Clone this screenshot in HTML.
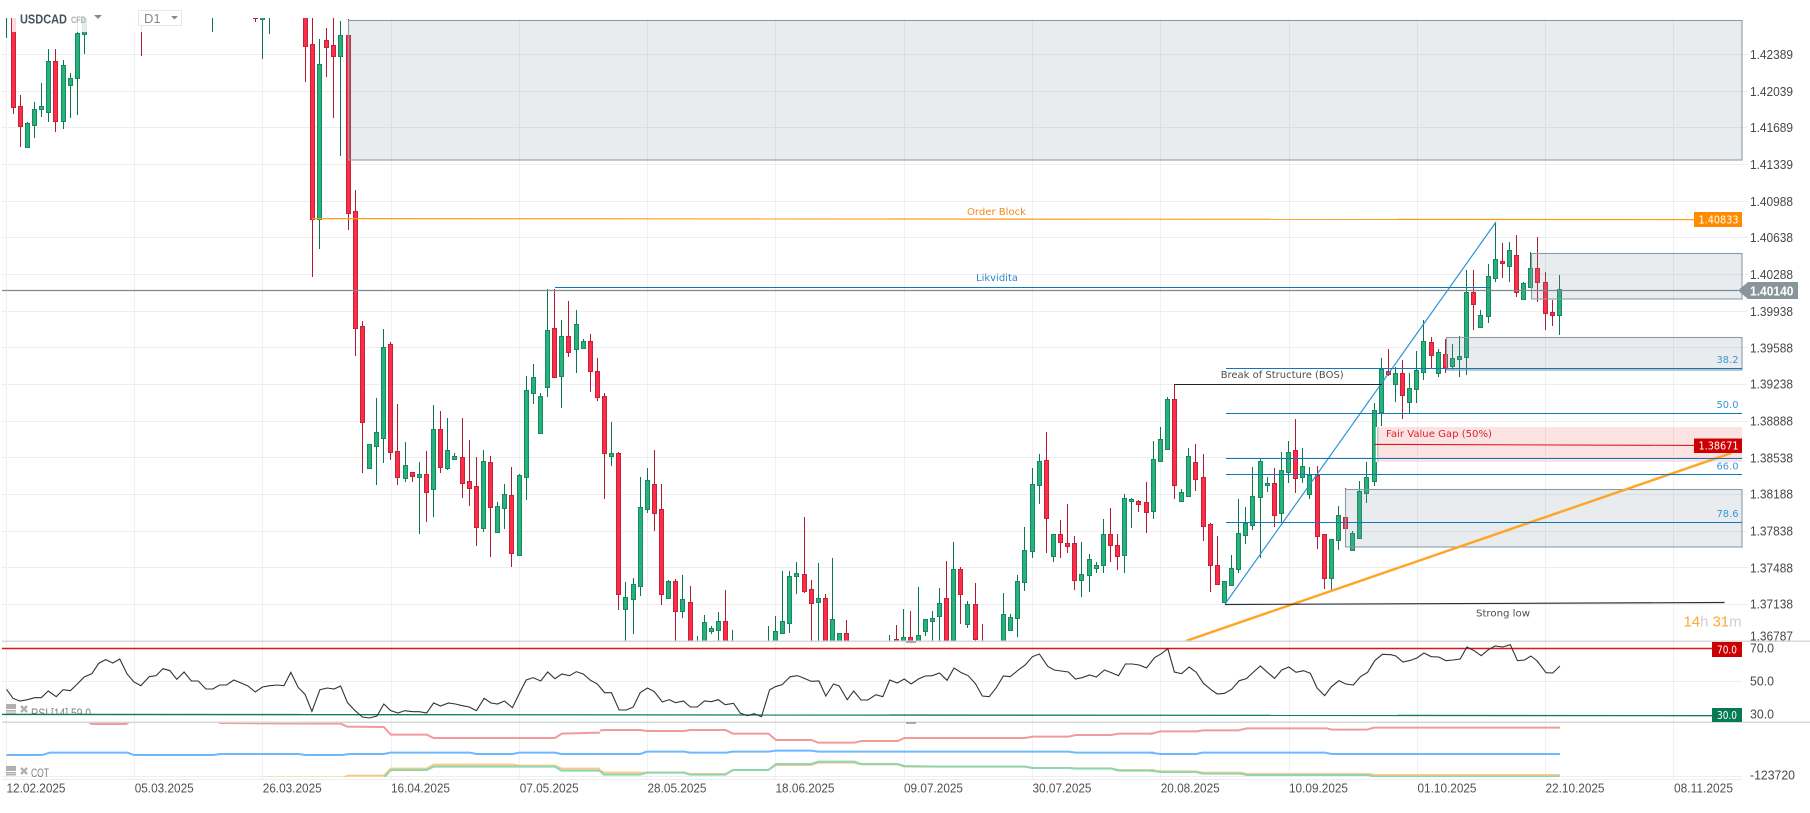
<!DOCTYPE html>
<html><head><meta charset="utf-8"><title>USDCAD</title>
<style>
html,body{margin:0;padding:0;background:#fff;width:1810px;height:813px;overflow:hidden}
svg{display:block;font-family:"Liberation Sans",Arial,sans-serif;filter:blur(.3px)}
.dj{font-family:"DejaVu Sans",sans-serif;font-size:10px}
.ax text{font-size:13px;fill:#45494c}
.dt text{font-size:13px;fill:#4f5356}
.wl{fill:#fff;font-size:13px}
.ns{vector-effect:non-scaling-stroke;fill:none}
</style></head><body>
<svg width="1810" height="813" viewBox="0 0 1810 813" xmlns="http://www.w3.org/2000/svg">
<defs>
<clipPath id="cm"><rect x="0" y="18" width="1810" height="622.5"/></clipPath>
<clipPath id="cc"><rect x="0" y="723" width="1810" height="54"/></clipPath>
<clipPath id="cr"><rect x="0" y="690" width="300" height="24"/></clipPath>
</defs>
<rect width="1810" height="813" fill="#fff"/>
<!-- grid -->
<path d="M2 54.5H1748M2 91.5H1748M2 127.5H1748M2 164.5H1748M2 201.5H1748M2 237.5H1748M2 274.5H1748M2 311.5H1748M2 347.5H1748M2 384.5H1748M2 421.5H1748M2 457.5H1748M2 494.5H1748M2 531.5H1748M2 567.5H1748M2 604.5H1748M2 681.5H1742M2 776.5H1742M2 779.5H1742" stroke="#eeeeef" stroke-width="1" fill="none"/>
<path d="M6.5 18V779M134.5 18V779M262.5 18V779M391.5 18V779M519.5 18V779M647.5 18V779M775.5 18V779M904.5 18V779M1032.5 18V779M1160.5 18V779M1289.5 18V779M1417.5 18V779M1545.5 18V779M1673.5 18V779" stroke="#eff0f1" stroke-width="1" fill="none"/>
<!-- candles -->
<g clip-path="url(#cm)">
<path fill="none" stroke="#0d7550" stroke-width="1" d="M6.5 0V38M27.5 122V147M34.5 102V138M41.5 83V117M48.5 49V122M63.5 60V129M70.5 73V118M77.5 25V115M84.5 0V54M212.5 0V32M262.5 0V59M269.5 0V34M319.5 39V249M340.5 21V156M369.5 444V468M376.5 398V485M383.5 329V463M405.5 442V482M419.5 462V534M433.5 405V517M447.5 418V470M454.5 453V459M483.5 450V532M497.5 502V532M504.5 484V529M519.5 474V555M526.5 376V500M533.5 364V404M540.5 393V433M547.5 289V397M561.5 320V408M576.5 310V373M583.5 339V348M611.5 422V466M625.5 582V660M633.5 578V634M640.5 477V596M647.5 468V513M668.5 580V598M682.5 575V618M697.5 636V660M704.5 615V660M711.5 626V634M718.5 612V660M732.5 630V660M768.5 626V660M775.5 616V660M782.5 571V634M789.5 571V633M796.5 562V594M818.5 563V660M832.5 558V660M839.5 633V660M889.5 635V660M903.5 609V660M918.5 587V660M925.5 619V636M932.5 611V660M939.5 588V660M953.5 542V640M967.5 601V628M1003.5 593V660M1010.5 614V630M1017.5 575V637M1024.5 527V591M1032.5 468V558M1039.5 454V504M1053.5 534V562M1081.5 542V597M1089.5 554V592M1096.5 562V573M1103.5 519V573M1124.5 494V573M1131.5 498V528M1153.5 441V519M1160.5 427V461M1167.5 397V449M1181.5 489V501M1188.5 448V496M1224.5 581V603M1231.5 555V586M1238.5 499V573M1245.5 507V544M1252.5 467V530M1260.5 458V558M1267.5 477V492M1281.5 452V523M1288.5 441V483M1302.5 448V483M1309.5 467V499M1331.5 539V590M1338.5 506V550M1352.5 531V550M1359.5 481V538M1366.5 462V503M1374.5 403V486M1381.5 358V426M1395.5 367V402M1409.5 373V413M1416.5 351V403M1423.5 320V380M1438.5 349V377M1452.5 344V370M1459.5 336V377M1466.5 270V375M1480.5 310V327M1488.5 264V323M1495.5 222V282M1509.5 242V282M1523.5 282V299M1530.5 252V287M1559.5 275V335"/>
<path fill="none" stroke="#b21a32" stroke-width="1" d="M13.5 0V114M20.5 95V147M55.5 49V132M141.5 0V56M255.5 0V22M305.5 0V82M312.5 0V277M326.5 28V77M333.5 0V118M348.5 19V230M355.5 190V356M362.5 321V473M390.5 342V460M397.5 404V485M412.5 472V482M426.5 451V522M440.5 411V473M462.5 418V498M469.5 440V506M476.5 457V546M490.5 456V557M511.5 467V567M554.5 289V378M568.5 301V357M590.5 334V392M597.5 358V401M604.5 393V499M618.5 452V610M654.5 450V531M661.5 484V605M675.5 579V660M690.5 586V660M725.5 590V660M804.5 517V593M811.5 580V660M825.5 594V660M846.5 620V660M896.5 625V660M910.5 611V660M946.5 561V660M960.5 567V624M975.5 583V660M982.5 624V660M1046.5 432V553M1060.5 520V558M1067.5 504V553M1074.5 536V590M1110.5 508V562M1117.5 534V570M1138.5 500V512M1146.5 482V533M1174.5 384V499M1195.5 444V491M1203.5 454V541M1210.5 523V592M1217.5 536V584M1274.5 468V527M1295.5 419V493M1317.5 466V549M1324.5 534V589M1345.5 488V547M1388.5 349V376M1402.5 360V419M1431.5 337V368M1445.5 339V373M1473.5 270V330M1502.5 243V278M1516.5 235V297M1537.5 237V302M1545.5 272V330M1552.5 300V326"/>
<path fill="#25b27b" stroke="#17885f" stroke-width="1" d="M25.5 123.5h4V147.5h-4zM32.5 109.5h4V125.5h-4zM39.5 106.5h4V109.5h-4zM46.5 61.5h4V112.5h-4zM61.5 65.5h4V121.5h-4zM68.5 78.5h4V85.5h-4zM75.5 33.5h4V78.5h-4zM82.5 0h4V34.5h-4zM260.5 0h4V19.5h-4zM317.5 64.5h4V219.5h-4zM338.5 35.5h4V56.5h-4zM367.5 444.5h4V468.5h-4zM374.5 432.5h4V446.5h-4zM381.5 347.5h4V438.5h-4zM403.5 465.5h4V478.5h-4zM417.5 474.5h4V477.5h-4zM431.5 429.5h4V489.5h-4zM445.5 450.5h4V468.5h-4zM452.5 456.5h4V459.5h-4zM481.5 461.5h4V528.5h-4zM495.5 506.5h4V532.5h-4zM502.5 494.5h4V508.5h-4zM517.5 475.5h4V555.5h-4zM524.5 390.5h4V477.5h-4zM531.5 377.5h4V393.5h-4zM538.5 396.5h4V433.5h-4zM545.5 330.5h4V387.5h-4zM559.5 336.5h4V376.5h-4zM574.5 324.5h4V349.5h-4zM581.5 341.5h4V348.5h-4zM609.5 453.5h4V456.5h-4zM623.5 597.5h4V609.5h-4zM631.5 584.5h4V599.5h-4zM638.5 507.5h4V586.5h-4zM645.5 480.5h4V509.5h-4zM666.5 581.5h4V598.5h-4zM680.5 599.5h4V611.5h-4zM702.5 622.5h4V660h-4zM709.5 628.5h4V631.5h-4zM716.5 621.5h4V630.5h-4zM773.5 631.5h4V660h-4zM780.5 621.5h4V633.5h-4zM787.5 576.5h4V623.5h-4zM794.5 573.5h4V576.5h-4zM816.5 598.5h4V602.5h-4zM830.5 619.5h4V660h-4zM837.5 633.5h4V660h-4zM901.5 637.5h4V660h-4zM916.5 635.5h4V660h-4zM923.5 619.5h4V631.5h-4zM930.5 618.5h4V621.5h-4zM937.5 603.5h4V616.5h-4zM951.5 569.5h4V640.5h-4zM965.5 604.5h4V624.5h-4zM1001.5 614.5h4V660h-4zM1008.5 617.5h4V630.5h-4zM1015.5 581.5h4V618.5h-4zM1022.5 550.5h4V582.5h-4zM1030.5 484.5h4V551.5h-4zM1037.5 461.5h4V485.5h-4zM1051.5 534.5h4V556.5h-4zM1079.5 574.5h4V580.5h-4zM1087.5 559.5h4V575.5h-4zM1094.5 565.5h4V568.5h-4zM1101.5 534.5h4V565.5h-4zM1122.5 498.5h4V555.5h-4zM1129.5 499.5h4V501.5h-4zM1151.5 459.5h4V511.5h-4zM1158.5 439.5h4V461.5h-4zM1165.5 399.5h4V449.5h-4zM1179.5 492.5h4V501.5h-4zM1186.5 456.5h4V496.5h-4zM1222.5 581.5h4V602.5h-4zM1229.5 568.5h4V585.5h-4zM1236.5 533.5h4V569.5h-4zM1243.5 523.5h4V535.5h-4zM1250.5 496.5h4V525.5h-4zM1258.5 461.5h4V497.5h-4zM1265.5 483.5h4V485.5h-4zM1279.5 470.5h4V513.5h-4zM1286.5 452.5h4V472.5h-4zM1300.5 466.5h4V477.5h-4zM1307.5 475.5h4V494.5h-4zM1329.5 539.5h4V578.5h-4zM1336.5 515.5h4V540.5h-4zM1350.5 533.5h4V550.5h-4zM1357.5 491.5h4V538.5h-4zM1364.5 477.5h4V493.5h-4zM1372.5 410.5h4V481.5h-4zM1379.5 369.5h4V412.5h-4zM1393.5 373.5h4V384.5h-4zM1407.5 388.5h4V402.5h-4zM1414.5 370.5h4V389.5h-4zM1421.5 341.5h4V372.5h-4zM1436.5 352.5h4V373.5h-4zM1450.5 358.5h4V366.5h-4zM1457.5 356.5h4V359.5h-4zM1464.5 292.5h4V357.5h-4zM1478.5 315.5h4V327.5h-4zM1486.5 276.5h4V316.5h-4zM1493.5 259.5h4V278.5h-4zM1507.5 250.5h4V266.5h-4zM1521.5 283.5h4V299.5h-4zM1528.5 268.5h4V287.5h-4zM1557.5 289.5h4V315.5h-4z"/>
<path fill="#ff2e48" stroke="#c2223a" stroke-width="1" d="M11.5 0h4V107.5h-4zM18.5 106.5h4V126.5h-4zM53.5 61.5h4V121.5h-4zM253.5 0h4V18.5h-4zM303.5 0h4V46.5h-4zM310.5 44.5h4V219.5h-4zM324.5 40.5h4V47.5h-4zM331.5 45.5h4V56.5h-4zM346.5 35.5h4V213.5h-4zM353.5 211.5h4V328.5h-4zM360.5 326.5h4V422.5h-4zM388.5 344.5h4V452.5h-4zM395.5 451.5h4V477.5h-4zM410.5 472.5h4V476.5h-4zM424.5 474.5h4V492.5h-4zM438.5 429.5h4V467.5h-4zM460.5 457.5h4V483.5h-4zM467.5 481.5h4V488.5h-4zM474.5 486.5h4V527.5h-4zM488.5 462.5h4V507.5h-4zM509.5 495.5h4V553.5h-4zM552.5 328.5h4V377.5h-4zM566.5 336.5h4V352.5h-4zM588.5 341.5h4V371.5h-4zM595.5 371.5h4V397.5h-4zM602.5 396.5h4V453.5h-4zM616.5 453.5h4V594.5h-4zM652.5 484.5h4V513.5h-4zM659.5 509.5h4V594.5h-4zM673.5 581.5h4V611.5h-4zM688.5 602.5h4V660h-4zM723.5 621.5h4V660h-4zM802.5 574.5h4V591.5h-4zM809.5 589.5h4V603.5h-4zM823.5 598.5h4V660h-4zM844.5 633.5h4V660h-4zM894.5 639.5h4V660h-4zM908.5 637.5h4V660h-4zM944.5 598.5h4V640.5h-4zM958.5 569.5h4V594.5h-4zM973.5 604.5h4V639.5h-4zM1044.5 460.5h4V518.5h-4zM1058.5 534.5h4V542.5h-4zM1065.5 543.5h4V546.5h-4zM1072.5 543.5h4V580.5h-4zM1108.5 534.5h4V545.5h-4zM1115.5 545.5h4V556.5h-4zM1136.5 501.5h4V504.5h-4zM1144.5 502.5h4V512.5h-4zM1172.5 399.5h4V485.5h-4zM1193.5 462.5h4V479.5h-4zM1201.5 477.5h4V526.5h-4zM1208.5 524.5h4V565.5h-4zM1215.5 565.5h4V584.5h-4zM1272.5 483.5h4V515.5h-4zM1293.5 450.5h4V478.5h-4zM1315.5 475.5h4V536.5h-4zM1322.5 534.5h4V578.5h-4zM1343.5 517.5h4V528.5h-4zM1386.5 371.5h4V374.5h-4zM1400.5 373.5h4V395.5h-4zM1429.5 342.5h4V355.5h-4zM1443.5 354.5h4V367.5h-4zM1471.5 292.5h4V304.5h-4zM1500.5 261.5h4V263.5h-4zM1514.5 255.5h4V292.5h-4zM1535.5 268.5h4V282.5h-4zM1543.5 282.5h4V313.5h-4zM1550.5 312.5h4V315.5h-4z"/>
</g>
<rect x="12" y="18" width="175" height="14" fill="#fff" fill-opacity=".84"/>
<!-- zones -->
<g stroke="#8b9ca8" stroke-width="1.1" fill="#8296a8" fill-opacity=".18">
<rect x="348.5" y="20.5" width="1393.5" height="139.5"/>
<rect x="1531.5" y="253.5" width="210.5" height="45.5"/>
<rect x="1446.5" y="337.5" width="295.5" height="32.5"/>
<rect x="1345.5" y="489.5" width="396.5" height="57.5"/>
</g>
<rect x="1376" y="427" width="366" height="35" fill="#e83c3c" fill-opacity=".14"/>
<path d="M1376.5 427V462" stroke="#fff" stroke-width="1.5"/>
<path d="M1377.8 427V462" stroke="#8b9ca8" stroke-width="1" stroke-opacity=".7"/>
<!-- lines -->
<g clip-path="url(#cm)" fill="none">
<path d="M1185.8 641L1731.5 453" stroke="#ffa426" stroke-width="2.4"/>
<path d="M1225 604L1496 222" stroke="#2b95d6" stroke-width="1.2"/>
<path d="M1225 604.5L1724.5 602.5" stroke="#2a3136" stroke-width="1.2"/>
<path d="M1174 384.5H1382" stroke="#1f2428" stroke-width="1.1"/>
<path d="M555 287.5H1490" stroke="#1077b8" stroke-width="1.1"/>
<path d="M2 290.5H1738" stroke="#7e8990" stroke-width="1.2"/>
<path d="M312 218.6L1694 219.6" stroke="#ff9a1a" stroke-width="1.2"/>
<path d="M1374 444.4L1694 445.4" stroke="#d81818" stroke-width="1.1"/>
<path d="M1226 368.5H1742M1226 413.5H1742M1226 458.5H1742M1226 474.5H1742M1226 522.5H1742" stroke="#1077b8" stroke-width="1.1"/>
</g>
<!-- annotations -->
<text class="dj" x="967" y="215" fill="#f08c1e" textLength="59" lengthAdjust="spacingAndGlyphs">Order Block</text>
<text class="dj" x="976" y="281" fill="#2a8ccc" textLength="42" lengthAdjust="spacingAndGlyphs">Likvidita</text>
<text class="dj" x="1220.7" y="378" fill="#4a4f53" textLength="123" lengthAdjust="spacingAndGlyphs">Break of Structure (BOS)</text>
<text class="dj" x="1386" y="437" fill="#d9252c" textLength="106" lengthAdjust="spacingAndGlyphs">Fair Value Gap (50%)</text>
<text class="dj" x="1476" y="616.5" fill="#4a4f53" textLength="54" lengthAdjust="spacingAndGlyphs">Strong low</text>
<g class="dj" fill="#3a96d6">
<text x="1716.5" y="363" textLength="22" lengthAdjust="spacingAndGlyphs">38.2</text>
<text x="1716.5" y="408" textLength="22" lengthAdjust="spacingAndGlyphs">50.0</text>
<text x="1716.5" y="469.5" textLength="22" lengthAdjust="spacingAndGlyphs">66.0</text>
<text x="1716.5" y="517" textLength="22" lengthAdjust="spacingAndGlyphs">78.6</text>
</g>
<!-- price tags -->
<rect x="1694" y="212" width="48" height="15" fill="#ff8c00"/>
<text class="dj wl" x="1698.5" y="223.5" textLength="40" lengthAdjust="spacingAndGlyphs" style="font-size:10.5px">1.40833</text>
<rect x="1694" y="438.5" width="48" height="14.5" fill="#cc0000"/>
<text class="dj wl" x="1698.5" y="449.5" textLength="40" lengthAdjust="spacingAndGlyphs" style="font-size:10.5px">1.38671</text>
<path d="M1738 290.5L1748 282H1798V299H1748Z" fill="#8a959b"/>
<text x="1750" y="295.5" fill="#fff" font-size="13" font-weight="bold" textLength="43.5" lengthAdjust="spacingAndGlyphs">1.40140</text>
<!-- axis -->
<g class="ax">
<text x="1750" y="59" textLength="43" lengthAdjust="spacingAndGlyphs">1.42389</text>
<text x="1750" y="96" textLength="43" lengthAdjust="spacingAndGlyphs">1.42039</text>
<text x="1750" y="132" textLength="43" lengthAdjust="spacingAndGlyphs">1.41689</text>
<text x="1750" y="169" textLength="43" lengthAdjust="spacingAndGlyphs">1.41339</text>
<text x="1750" y="206" textLength="43" lengthAdjust="spacingAndGlyphs">1.40988</text>
<text x="1750" y="242" textLength="43" lengthAdjust="spacingAndGlyphs">1.40638</text>
<text x="1750" y="279" textLength="43" lengthAdjust="spacingAndGlyphs">1.40288</text>
<text x="1750" y="316" textLength="43" lengthAdjust="spacingAndGlyphs">1.39938</text>
<text x="1750" y="352.5" textLength="43" lengthAdjust="spacingAndGlyphs">1.39588</text>
<text x="1750" y="388.5" textLength="43" lengthAdjust="spacingAndGlyphs">1.39238</text>
<text x="1750" y="425.5" textLength="43" lengthAdjust="spacingAndGlyphs">1.38888</text>
<text x="1750" y="462.5" textLength="43" lengthAdjust="spacingAndGlyphs">1.38538</text>
<text x="1750" y="498.5" textLength="43" lengthAdjust="spacingAndGlyphs">1.38188</text>
<text x="1750" y="535.5" textLength="43" lengthAdjust="spacingAndGlyphs">1.37838</text>
<text x="1750" y="572.5" textLength="43" lengthAdjust="spacingAndGlyphs">1.37488</text>
<text x="1750" y="608.5" textLength="43" lengthAdjust="spacingAndGlyphs">1.37138</text>
<text x="1750" y="640.5" textLength="43" lengthAdjust="spacingAndGlyphs">1.36787</text>
<text x="1750" y="652.5" textLength="24" lengthAdjust="spacingAndGlyphs">70.0</text>
<text x="1750" y="685.5" textLength="24" lengthAdjust="spacingAndGlyphs">50.0</text>
<text x="1750" y="718.5" textLength="24" lengthAdjust="spacingAndGlyphs">30.0</text>
<text x="1750" y="779.5" textLength="45" lengthAdjust="spacingAndGlyphs">-123720</text>
</g>
<text x="1683.5" y="626.5" font-size="15" textLength="58" lengthAdjust="spacingAndGlyphs"><tspan fill="#ffa733">14</tspan><tspan fill="#cfcfcf">h </tspan><tspan fill="#ffa733">31</tspan><tspan fill="#cfcfcf">m</tspan></text>
<!-- panes -->
<rect x="2" y="640.5" width="1808" height="1.5" fill="#d8d8d8"/>
<rect x="2" y="721.5" width="1808" height="1.5" fill="#d8d8d8"/>
<rect x="906" y="641" width="10" height="2" fill="#aaa"/>
<rect x="906" y="722" width="10" height="2" fill="#aaa"/>
<!-- RSI -->
<path d="M2 648.5H1712" stroke="#e01818" stroke-width="1.4"/>
<path d="M2 714.4L1712 715.7" stroke="#0a7f5a" stroke-width="1.3"/>
<g stroke="#2f3438" stroke-width="1.1">
<path class="ns" transform="translate(0 400) scale(.3827 .33333)" d="M17 868L34 895 52 903 72 899 90 893 108 893 126 873 147 890 165 869 184 872 202 852 220 831 240 821 258 790 276 779 295 789 313 777 332 822 350 846 368 857 390 830 408 827 426 806 444 812 462 838 481 816 500 843 518 843 538 867 556 867 574 855 592 855 611 840 630 849 648 858 667 876 686 861 705 857 724 855 742 857 760 817 779 862 797 883 815 934 836 869 855 864 873 867 890 858 908 908 927 931 947 951 965 954 985 948 1003 912 1021 932 1040 939 1058 932 1078 935 1096 935 1115 939 1133 909 1151 918 1172 909 1190 912 1208 917 1226 921 1245 932 1265 895 1283 909 1300 912 1318 903 1339 923 1357 880 1375 840 1393 833 1413 843 1431 816 1450 836 1468 822 1488 827 1506 815 1524 822 1543 841 1561 852"/>
<path class="ns" transform="translate(600 400) scale(.3827 .33333)" d="M-7 852L12 878 30 878 50 930 69 930 87 921 105 878 124 864 142 875 163 906 181 899 197 908 218 903 236 921 254 921 273 903 291 905 309 899 327 914 349 910 367 940 385 947 403 941 422 950 443 870 458 860 476 854 497 830 516 827 534 835 552 844 572 843 590 888 610 852 625 858 646 899 663 873 682 900 700 900 721 884 739 890 757 840 777 849 795 837 813 852 832 837 850 828 868 827 887 819 907 841 925 804 944 818 962 827 981 851 999 888 1017 890 1035 864 1054 828 1072 830 1093 810 1111 795 1130 770 1148 762 1170 799 1187 810 1205 813 1224 816 1242 837 1260 833 1279 825 1297 831 1318 810 1336 818 1355 827 1373 792 1391 792 1409 795 1428 804 1449 773 1467 761 1485 745"/>
<path class="ns" transform="translate(1150 460) scale(.42088 .33333)" d="M42 565L58 636 75 641 93 621 110 637 127 670 145 689 160 702 177 700 194 688 212 662 229 656 246 636 262 618 279 637 296 655 313 630 330 621 347 637 365 632 381 640 397 684 415 707 431 680 449 662 465 672 483 675 500 650 517 637 534 602 552 583 572 584 584 588 601 606 619 601 634 594 651 579 668 590 686 591 703 602 720 600 737 597 753 561 770 572 787 587 804 569 820 558 838 561 856 554 873 602 890 600 905 588 920 603 941 638 957 639 974 618"/>
</g>
<rect x="1712" y="642" width="30" height="15" fill="#cc0000"/>
<text class="dj wl" x="1717" y="653.5" textLength="20" lengthAdjust="spacingAndGlyphs" style="font-size:10.5px">70.0</text>
<rect x="1712" y="708" width="30" height="14" fill="#067a55"/>
<text class="dj wl" x="1717" y="719" textLength="20" lengthAdjust="spacingAndGlyphs" style="font-size:10.5px">30.0</text>
<!-- COT -->
<g clip-path="url(#cc)" stroke-width="2">
<g stroke="#f29b9b">
<path class="ns" transform="translate(0 400) scale(.3827 .33333)" d="M17 960L222 960 240 972 330 972 345 960 560 960 575 969 680 970 890 971 908 980 1003 981 1021 1004 1115 1004 1133 1014 1450 1014 1468 1001 1568 998"/>
<path class="ns" transform="translate(600 400) scale(.3827 .33333)" d="M0 992L10 990 105 990 122 993 220 993 235 990 328 990 347 1001 440 1001 460 1020 552 1020 570 1028 665 1028 682 1023 778 1023 795 1014 1110 1014 1130 1010 1225 1010 1242 1005 1336 1005 1355 1001 1447 1001"/>
<path class="ns" transform="translate(1150 460) scale(.42088 .33333)" d="M0 822L25 814 110 814 125 811 210 811 230 805 420 805 432 809 515 809 532 803 974 803"/>
</g>
<g stroke="#6db8ff">
<path class="ns" transform="translate(0 400) scale(.3827 .33333)" d="M17 1065L110 1065 130 1058 333 1058 350 1065 558 1065 575 1062 780 1062 797 1065 895 1065 912 1062 1003 1062 1020 1058 1228 1058 1245 1062 1340 1062 1357 1058 1450 1058 1467 1062 1568 1062"/>
<path class="ns" transform="translate(600 400) scale(.3827 .33333)" d="M0 1062L105 1062 122 1055 220 1055 235 1058 330 1058 347 1055 440 1055 460 1052 552 1052 570 1055 1225 1055 1242 1058 1447 1058"/>
<path class="ns" transform="translate(1150 460) scale(.42088 .33333)" d="M0 878L25 882 110 882 125 878 415 878 432 882 974 882"/>
</g>
<g stroke="#fbc888">
<path class="ns" transform="translate(0 400) scale(.3827 .33333)" d="M228 1138L450 1138 565 1137 580 1135 680 1135 690 1133 895 1133 910 1127 1003 1127 1021 1106 1115 1106 1133 1094 1340 1094 1357 1097 1450 1097 1467 1106 1568 1106"/>
<path class="ns" transform="translate(600 400) scale(.3827 .33333)" d="M0 1110L10 1118 220 1118 235 1122 328 1122 347 1110 440 1110 460 1095 552 1095 570 1088 665 1088 682 1093 778 1093 795 1100 1110 1100 1130 1104 1225 1104 1242 1105 1336 1105 1355 1110 1447 1110"/>
<path class="ns" transform="translate(1150 460) scale(.42088 .33333)" d="M0 930L25 934 110 934 125 938 215 938 230 942 520 942 532 945 974 945"/>
</g>
<g stroke="#8ed6b0">
<path class="ns" transform="translate(0 400) scale(.3827 .33333)" d="M900 1138L920 1134 1003 1134 1021 1110 1115 1110 1133 1100 1450 1100 1467 1112 1568 1112"/>
<path class="ns" transform="translate(600 400) scale(.3827 .33333)" d="M0 1114L10 1124 105 1124 122 1118 220 1118 235 1124 328 1124 347 1110 440 1110 460 1092 552 1092 570 1085 665 1085 682 1092 778 1092 795 1098 890 1100 1110 1100 1130 1104 1225 1104 1242 1106 1336 1106 1355 1112 1447 1112"/>
<path class="ns" transform="translate(1150 460) scale(.42088 .33333)" d="M0 932L25 936 110 936 125 941 215 941 230 945 520 945 532 950 974 950"/>
</g>
</g>
<!-- indicator legends -->
<g fill="#b0b0b0">
<rect x="6" y="704" width="10" height="5"/><rect x="6" y="710" width="10" height="1.6"/><rect x="6" y="712.5" width="10" height="1.5"/>
<rect x="6" y="766" width="10" height="5"/><rect x="6" y="772" width="10" height="1.6"/><rect x="6" y="774" width="10" height="1.5"/>
</g>
<path d="M21 706L27 712M27 706L21 712M21 768L27 774M27 768L21 774" stroke="#b0b0b0" stroke-width="2.4" fill="none"/>
<g clip-path="url(#cr)"><text x="31" y="717.5" font-size="13" fill="#7f7f7f" textLength="60" lengthAdjust="spacingAndGlyphs">RSI [14] 59.0</text></g>
<path d="M2 714.5H300" stroke="#0a7f5a" stroke-width="1.3"/>
<text x="31" y="777" font-size="12" fill="#7f7f7f" textLength="18" lengthAdjust="spacingAndGlyphs">COT</text>
<!-- dates -->
<g class="dt">
<text x="6.5" y="792.5" textLength="59" lengthAdjust="spacingAndGlyphs">12.02.2025</text>
<text x="134.7" y="792.5" textLength="59" lengthAdjust="spacingAndGlyphs">05.03.2025</text>
<text x="262.7" y="792.5" textLength="59" lengthAdjust="spacingAndGlyphs">26.03.2025</text>
<text x="391" y="792.5" textLength="59" lengthAdjust="spacingAndGlyphs">16.04.2025</text>
<text x="519.7" y="792.5" textLength="59" lengthAdjust="spacingAndGlyphs">07.05.2025</text>
<text x="647.5" y="792.5" textLength="59" lengthAdjust="spacingAndGlyphs">28.05.2025</text>
<text x="775.5" y="792.5" textLength="59" lengthAdjust="spacingAndGlyphs">18.06.2025</text>
<text x="904" y="792.5" textLength="59" lengthAdjust="spacingAndGlyphs">09.07.2025</text>
<text x="1032.5" y="792.5" textLength="59" lengthAdjust="spacingAndGlyphs">30.07.2025</text>
<text x="1160.7" y="792.5" textLength="59" lengthAdjust="spacingAndGlyphs">20.08.2025</text>
<text x="1289" y="792.5" textLength="59" lengthAdjust="spacingAndGlyphs">10.09.2025</text>
<text x="1417.5" y="792.5" textLength="59" lengthAdjust="spacingAndGlyphs">01.10.2025</text>
<text x="1545.5" y="792.5" textLength="59" lengthAdjust="spacingAndGlyphs">22.10.2025</text>
<text x="1674" y="792.5" textLength="59" lengthAdjust="spacingAndGlyphs">08.11.2025</text>
</g>
<!-- header -->
<text x="20" y="23.7" font-size="13" font-weight="bold" fill="#46525c" textLength="47" lengthAdjust="spacingAndGlyphs">USDCAD</text>
<text x="71" y="23" font-size="9.5" font-weight="bold" fill="#ababab" textLength="15" lengthAdjust="spacingAndGlyphs">CFD</text>
<path d="M94 15H102L98 19Z" fill="#8a8a8a"/>
<rect x="138.5" y="10.5" width="43" height="15" fill="#fff" stroke="#e8e8e8"/>
<text x="144" y="23" font-size="13" fill="#8a8a8a">D1</text>
<path d="M171 16H178L174.5 19.5Z" fill="#8a8a8a"/>
</svg>
</body></html>
